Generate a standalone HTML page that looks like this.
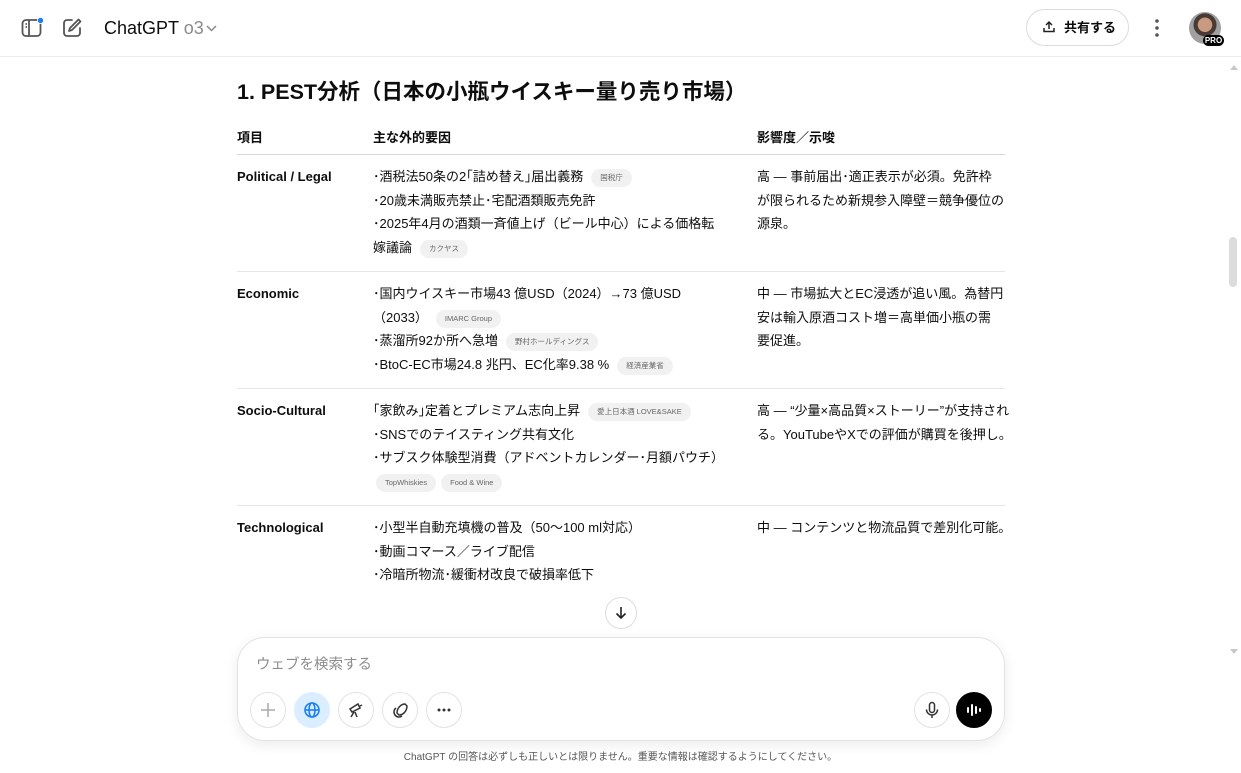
<!DOCTYPE html>
<html><head><meta charset="utf-8"><style>
*{margin:0;padding:0;box-sizing:border-box}
body{width:1241px;height:773px;overflow:hidden;background:#fff;font-family:"Liberation Sans","Noto Sans CJK JP",sans-serif;color:#0d0d0d;position:relative}
.a{position:absolute}
.c{font-size:13px;line-height:23.5px;white-space:nowrap}
.b{font-weight:bold}
.p{display:inline-block;background:#f1f1f1;color:#666;font-size:7.5px;line-height:18px;height:18px;padding:0 9px;border-radius:9px;vertical-align:1px;margin-left:8px}
.hr{position:absolute;left:237px;width:768px;height:1px;background:#e5e5e5}
.btn{position:absolute;top:692px;width:36px;height:36px;border-radius:50%;border:1px solid #e3e3e3;display:flex;align-items:center;justify-content:center}
</style></head><body>
<div class="a" style="left:0;top:56px;width:1241px;height:1px;background:#ececec"></div>
<svg class="a" style="left:21px;top:17px" width="24" height="22" viewBox="0 0 24 22"><rect x="1.5" y="3" width="18" height="16" rx="3.5" fill="none" stroke="#555" stroke-width="1.8"/><path d="M8 3v16M4.5 7h1.5M4.5 10h1.5" stroke="#555" stroke-width="1.8"/><circle cx="19.5" cy="3.5" r="3.5" fill="#fff"/><circle cx="19.5" cy="3.5" r="2.7" fill="#1a7ff0"/></svg>
<svg class="a" style="left:61px;top:17px" width="22" height="22" viewBox="0 0 22 22"><path d="M11 3H6a3 3 0 0 0-3 3v10a3 3 0 0 0 3 3h10a3 3 0 0 0 3-3v-5" fill="none" stroke="#555" stroke-width="1.8" stroke-linecap="round"/><path d="M17.5 2.5l2 2L11 13l-3 1 1-3z" fill="none" stroke="#555" stroke-width="1.8" stroke-linejoin="round"/></svg>
<div class="a" style="left:104px;top:17px;font-size:18px;line-height:22px">ChatGPT <span style="color:#8a8a8a">o3</span></div>
<svg class="a" style="left:205px;top:23px" width="13" height="10" viewBox="0 0 13 10"><path d="M2 3l4.5 4.5L11 3" fill="none" stroke="#888" stroke-width="1.5"/></svg>
<div class="a" style="left:1026px;top:9px;width:103px;height:37px;border:1px solid #dcdcdc;border-radius:19px;font-size:13px;font-weight:bold;line-height:35px;padding-left:37px">共有する</div>
<svg class="a" style="left:1042px;top:20px" width="14" height="14" viewBox="0 0 14 14"><path d="M7 9V2M4 5l3-3 3 3M2 8v3.5h10V8" fill="none" stroke="#222" stroke-width="1.5"/></svg>
<svg class="a" style="left:1150px;top:17px" width="14" height="22"><circle cx="7" cy="4" r="1.8" fill="#555"/><circle cx="7" cy="11" r="1.8" fill="#555"/><circle cx="7" cy="18" r="1.8" fill="#555"/></svg>
<div class="a" style="left:1189px;top:12px;width:32px;height:32px;border-radius:50%;background:radial-gradient(circle at 50% 40%,#c89a80 0 28%,#4a3a35 30% 45%,#a0a0a0 47%)"></div>
<div class="a" style="left:1203px;top:35px;width:21px;height:11px;border-radius:6px;background:#000;color:#fff;font-size:8px;font-weight:bold;line-height:11px;text-align:center">PRO</div>
<div class="a b" style="left:237px;top:78px;font-size:21.5px;line-height:28px">1. PEST分析（日本の小瓶ウイスキー量り売り市場）</div>
<div class="a c b" style="left:237px;top:126px">項目</div>
<div class="a c b" style="left:373px;top:126px">主な外的要因</div>
<div class="a c b" style="left:757px;top:126px">影響度／示唆</div>
<div class="hr" style="top:154px;background:#d9d9d9"></div>
<div class="hr" style="top:271px"></div>
<div class="hr" style="top:388px"></div>
<div class="hr" style="top:505px"></div>
<div class="a c b" style="left:237px;top:165px">Political / Legal</div>
<div class="a c" style="left:373px;top:165px">･酒税法50条の2｢詰め替え｣届出義務<span class="p">国税庁</span><br>･20歳未満販売禁止･宅配酒類販売免許<br>･2025年4月の酒類一斉値上げ（ビール中心）による価格転<br>嫁議論<span class="p">カクヤス</span></div>
<div class="a c" style="left:757px;top:165px">高 ― 事前届出･適正表示が必須。免許枠<br>が限られるため新規参入障壁＝競争優位の<br>源泉。</div>
<div class="a c b" style="left:237px;top:282px">Economic</div>
<div class="a c" style="left:373px;top:282px">･国内ウイスキー市場43 億USD（2024）→73 億USD<br>（2033）<span class="p">IMARC Group</span><br>･蒸溜所92か所へ急増<span class="p">野村ホールディングス</span><br>･BtoC-EC市場24.8 兆円、EC化率9.38 %<span class="p">経済産業省</span></div>
<div class="a c" style="left:757px;top:282px">中 ― 市場拡大とEC浸透が追い風。為替円<br>安は輸入原酒コスト増＝高単価小瓶の需<br>要促進。</div>
<div class="a c b" style="left:237px;top:399px">Socio-Cultural</div>
<div class="a c" style="left:373px;top:399px">｢家飲み｣定着とプレミアム志向上昇<span class="p">愛上日本酒 LOVE&amp;SAKE</span><br>･SNSでのテイスティング共有文化<br>･サブスク体験型消費（アドベントカレンダー･月額パウチ）<br><span class="p" style="margin-left:3px">TopWhiskies</span><span class="p" style="margin-left:5px">Food &amp; Wine</span></div>
<div class="a c" style="left:757px;top:399px">高 ― “少量×高品質×ストーリー”が支持され<br>る。YouTubeやXでの評価が購買を後押し。</div>
<div class="a c b" style="left:237px;top:516px">Technological</div>
<div class="a c" style="left:373px;top:516px">･小型半自動充填機の普及（50〜100 ml対応）<br>･動画コマース／ライブ配信<br>･冷暗所物流･緩衝材改良で破損率低下</div>
<div class="a c" style="left:757px;top:516px">中 ― コンテンツと物流品質で差別化可能。</div>
<div class="a" style="left:0;top:580px;width:1225px;height:60px;background:linear-gradient(rgba(255,255,255,0),#fff 70%)"></div>
<div class="a" style="left:1229px;top:237px;width:8px;height:50px;border-radius:4px;background:#dcdcdc"></div>
<svg class="a" style="left:1229px;top:648px" width="10" height="8"><path d="M1 1h8L5 6z" fill="#c8c8c8"/></svg>
<svg class="a" style="left:1229px;top:64px" width="10" height="8"><path d="M1 6h8L5 1z" fill="#c8c8c8"/></svg>
<div class="a" style="left:605px;top:597px;width:32px;height:32px;border-radius:50%;border:1px solid #ddd;background:#fff"></div>
<svg class="a" style="left:613px;top:605px" width="16" height="16" viewBox="0 0 16 16"><path d="M8 2v11M3.5 8.5L8 13l4.5-4.5" fill="none" stroke="#222" stroke-width="1.6"/></svg>
<div class="a" style="left:237px;top:637px;width:768px;height:104px;border:1px solid #e3e3e3;border-radius:28px;background:#fff;box-shadow:0 4px 14px rgba(0,0,0,.08)"></div>
<div class="a" style="left:256px;top:654px;font-size:14.5px;line-height:22px;color:#8e8e8e">ウェブを検索する</div>
<div class="btn" style="left:250px"><svg width="18" height="18"><path d="M9 2v14M2 9h14" stroke="#aaa" stroke-width="1.5"/></svg></div>
<div class="btn" style="left:294px;background:#dbeeff;border-color:#dbeeff"><svg width="18" height="18" viewBox="0 0 18 18"><circle cx="9" cy="9" r="7" fill="none" stroke="#1a7ff0" stroke-width="1.6"/><ellipse cx="9" cy="9" rx="3" ry="7" fill="none" stroke="#1a7ff0" stroke-width="1.6"/><path d="M2 9h14" stroke="#1a7ff0" stroke-width="1.6"/></svg></div>
<div class="btn" style="left:338px"><svg width="18" height="18" viewBox="0 0 18 18"><path d="M3 8l8-5 2 4-8 4zM7 11l-3 5M8 11l2 5M13 5l2-1" fill="none" stroke="#333" stroke-width="1.5"/></svg></div>
<div class="btn" style="left:382px"><svg width="18" height="18" viewBox="0 0 18 18"><path d="M14 3C10 3 6 7 6 12l2 2c5 0 8-5 8-9zM5 7a5 5 0 1 0 6 8" fill="none" stroke="#333" stroke-width="1.5"/></svg></div>
<div class="btn" style="left:426px"><svg width="18" height="18"><circle cx="4" cy="9" r="1.5" fill="#333"/><circle cx="9" cy="9" r="1.5" fill="#333"/><circle cx="14" cy="9" r="1.5" fill="#333"/></svg></div>
<div class="btn" style="left:914px"><svg width="18" height="18" viewBox="0 0 18 18"><rect x="6.5" y="1.5" width="5" height="10" rx="2.5" fill="none" stroke="#333" stroke-width="1.5"/><path d="M3.5 8.5a5.5 5.5 0 0 0 11 0M9 14v3" fill="none" stroke="#333" stroke-width="1.5"/></svg></div>
<div class="btn" style="left:956px;background:#000;border-color:#000"><svg width="18" height="18"><path d="M3 7v4M7 4v10M11 6v6M15 8v2" stroke="#fff" stroke-width="2" stroke-linecap="round"/></svg></div>
<div class="a" style="left:0;top:750px;width:1241px;text-align:center;font-size:10px;line-height:16px;color:#555">ChatGPT の回答は必ずしも正しいとは限りません。重要な情報は確認するようにしてください。</div>
</body></html>
